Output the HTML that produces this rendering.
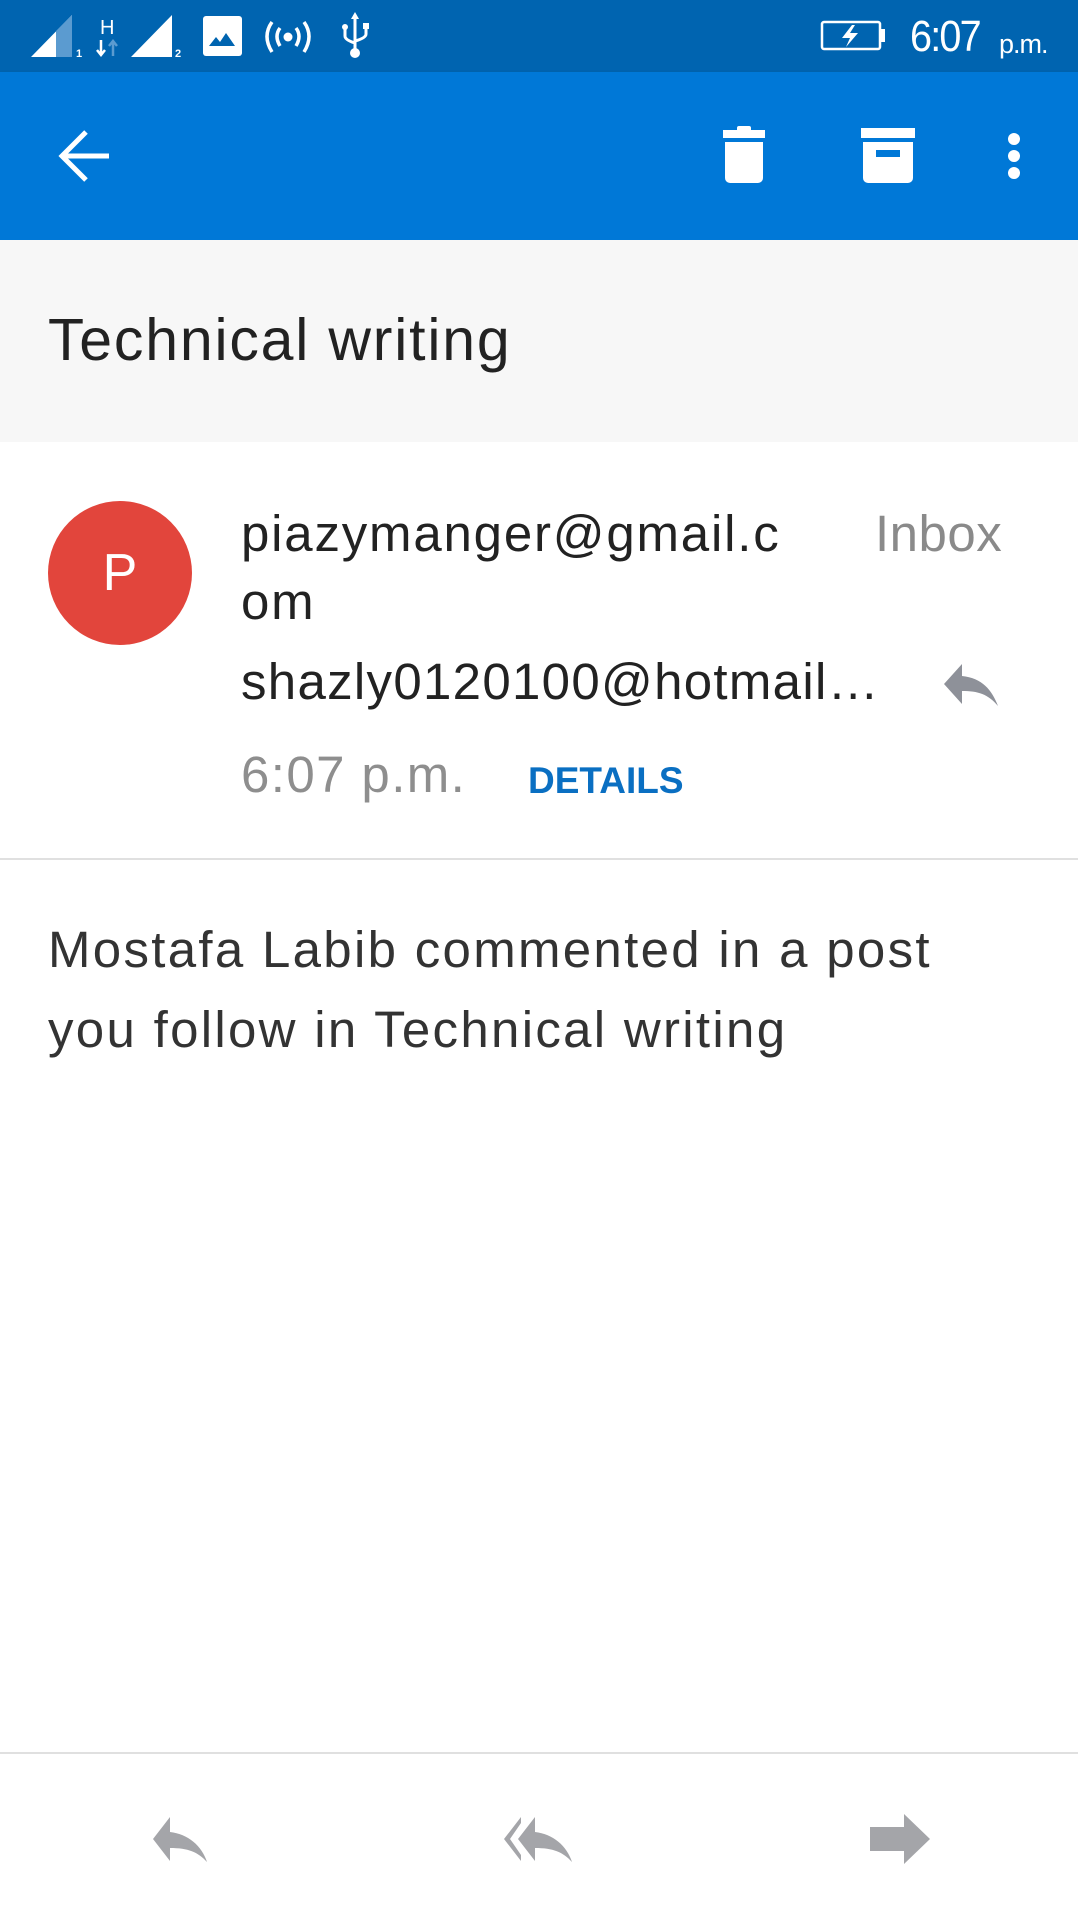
<!DOCTYPE html>
<html><head><meta charset="utf-8"><style>
body{margin:0;width:1078px;height:1920px;background:#fff;font-family:"Liberation Sans",sans-serif;position:relative;overflow:hidden}
.a{position:absolute;white-space:nowrap}
</style></head><body>
<div class="a" style="left:0;top:0;width:1078px;height:72px;background:#0064b0"></div>
<div class="a" style="left:0;top:72px;width:1078px;height:168px;background:#0078d7;box-shadow:0 3px 5px rgba(0,0,0,.25)"></div>
<!-- status icons -->
<svg class="a" style="left:0;top:0" width="1078" height="72">
<polygon points="31,57 72,15 72,57" fill="#fff"/><polygon points="56,31 72,15 72,57 56,57" fill="#5b9bd0"/>
<text x="76" y="57" fill="#fff" font-size="11" font-weight="bold" font-family="Liberation Sans">1</text>
<text x="100" y="34" fill="#fff" font-size="20" font-family="Liberation Sans">H</text>
<path d="M101,40 V54 M97,50 L101,55 L105,50" stroke="#fff" stroke-width="2.5" fill="none"/>
<path d="M113,56 V42 M109,46 L113,41 L117,46" stroke="#5b9bd0" stroke-width="2.5" fill="none"/>
<polygon points="131,57 172,15 172,57" fill="#fff"/>
<text x="175" y="57" fill="#fff" font-size="11" font-weight="bold" font-family="Liberation Sans">2</text>
<rect x="203" y="16" width="39" height="40" rx="3" fill="#fff"/><polygon points="209,46 216,37 220,42 226,33 235,46" fill="#0064b0"/>
<g fill="none" stroke="#fff" stroke-width="3.5">
<path d="M272,22 Q262,36 272,52"/><path d="M280,28 Q274,36 280,46"/><path d="M304,22 Q314,36 304,52"/><path d="M296,28 Q302,36 296,46"/></g>
<circle cx="288" cy="37" r="4.5" fill="#fff"/>
<g stroke="#fff" stroke-width="3" fill="none"><path d="M355,16 V50"/><path d="M345,28 V36 Q345,40 355,43"/><path d="M366,26 V34 Q366,38 355,41"/></g>
<polygon points="355,12 351,19 359,19" fill="#fff"/><circle cx="345" cy="27" r="3" fill="#fff"/><rect x="363" y="23" width="6" height="6" fill="#fff"/><circle cx="355" cy="53" r="5" fill="#fff"/>
<rect x="822" y="22" width="58" height="27" rx="2" fill="none" stroke="#fff" stroke-width="2.5"/><rect x="880" y="29" width="5" height="13" fill="#fff"/>
<polygon points="852,25 842,38 850,38 846,47 858,33 850,33 855,25" fill="#fff"/>
</svg>
<div class="a" style="left:910px;top:12px;color:#fff;font-size:44px;letter-spacing:-2px;transform:scaleX(0.9);transform-origin:left">6:07</div>
<div class="a" style="left:999px;top:29px;color:#fff;font-size:27px;letter-spacing:-1px">p.m.</div>
<!-- app bar icons -->
<svg class="a" style="left:0;top:72px" width="1078" height="168">
<path d="M109,84 H63 M86,60 L62,84 L86,108" stroke="#fff" stroke-width="5" fill="none"/>
<rect x="723" y="58" width="42" height="8" fill="#fff"/><rect x="737" y="54" width="14" height="6" rx="2" fill="#fff"/>
<path d="M725,70 H763 V106 a5,5 0 0 1 -5,5 H730 a5,5 0 0 1 -5,-5 Z" fill="#fff"/>
<rect x="861" y="56" width="54" height="10" fill="#fff"/>
<path d="M863,70 H913 V106 a5,5 0 0 1 -5,5 H868 a5,5 0 0 1 -5,-5 Z" fill="#fff"/><rect x="876" y="78" width="24" height="7" fill="#0078d7"/>
<circle cx="1014" cy="67" r="6" fill="#fff"/><circle cx="1014" cy="84" r="6" fill="#fff"/><circle cx="1014" cy="101" r="6" fill="#fff"/>
</svg>
<div class="a" style="left:0;top:240px;width:1078px;height:202px;background:#f7f7f7"></div>
<div class="a" style="left:48px;top:306px;font-size:59px;color:#222;letter-spacing:1.8px">Technical writing</div>
<div class="a" style="left:48px;top:501px;width:144px;height:144px;border-radius:50%;background:#e2453c;color:#fff;font-size:52px;line-height:144px;text-align:center">P</div>
<div class="a" style="left:241px;top:500px;font-size:51px;color:#222;line-height:68px;letter-spacing:1.8px">piazymanger@gmail.c<br>om</div>
<div class="a" style="left:875px;top:500px;font-size:51px;color:#8a8a8a;line-height:68px;letter-spacing:0.5px">Inbox</div>
<div class="a" style="left:241px;top:652px;font-size:51px;color:#222;letter-spacing:1.3px">shazly0120100@hotmail…</div>
<svg class="a" style="left:940px;top:660px" width="62" height="50"><path d="M4,24 L22,4 V16 C42,18 52,30 58,46 C48,34 38,31 22,31 V44 Z" fill="#8e9199"/></svg>
<div class="a" style="left:241px;top:745px;font-size:51px;color:#8e8e8e;letter-spacing:1.4px">6:07 p.m.</div>
<div class="a" style="left:528px;top:760px;font-size:37px;font-weight:bold;color:#0a6fc2">DETAILS</div>
<div class="a" style="left:0;top:858px;width:1078px;height:2px;background:#e0e0e0"></div>
<div class="a" style="left:48px;top:910px;font-size:51px;color:#333;line-height:80px;letter-spacing:2.3px">Mostafa Labib commented in a post<br>you follow in Technical writing</div>
<div class="a" style="left:0;top:1752px;width:1078px;height:2px;background:#e0e0e0"></div>
<svg class="a" style="left:0;top:1800px" width="1078" height="80">
<path d="M153,39 L170,17 V32 C188,34 202,46 207,62 C198,52 188,48 170,48 V61 Z" fill="#a4a5a9"/>
<path d="M518,39 L535,17 V32 C553,34 567,46 572,62 C563,52 553,48 535,48 V61 Z" fill="#a4a5a9"/>
<path d="M504,39 L521,17 V23 L510,39 L521,55 V61 Z" fill="#a4a5a9"/>
<path d="M870,27 H904 V14 L930,39 L904,64 V51 H870 Z" fill="#a4a5a9"/>
</svg>
</body></html>
